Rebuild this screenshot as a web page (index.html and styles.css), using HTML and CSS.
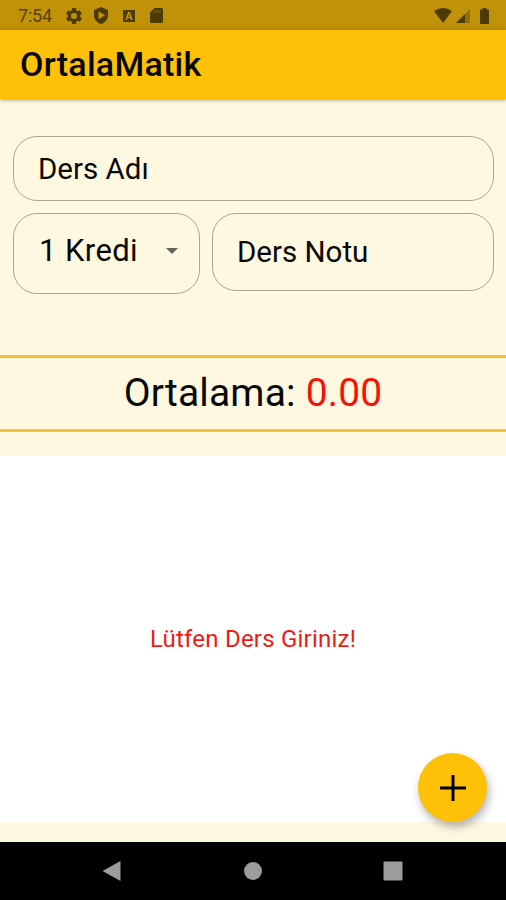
FILE: index.html
```html
<!DOCTYPE html>
<html lang="tr">
<head>
<meta charset="utf-8">
<title>OrtalaMatik</title>
<link rel="stylesheet" href="styles.css">
</head>
<body>
<div class="screen">
  <div class="status">
    <span class="clock">7:54</span>
    <svg class="ic gear" viewBox="2 2 20 20"><path fill-rule="evenodd" d="M19.4 13c.1-.7.1-1.3 0-2l2.1-1.6c.2-.2.2-.4.1-.6l-2-3.5c-.1-.2-.3-.3-.6-.2l-2.5 1c-.5-.4-1.1-.7-1.7-1l-.4-2.6c0-.3-.2-.5-.4-.5h-4c-.2 0-.4.2-.5.4l-.4 2.7c-.6.2-1.1.6-1.7 1l-2.5-1c-.2-.1-.5 0-.6.2l-2 3.5c-.1.2-.1.5.1.6L4.5 11c-.1.7-.1 1.3 0 2l-2.1 1.6c-.2.2-.2.4-.1.6l2 3.5c.1.2.3.3.6.2l2.5-1c.5.4 1.1.7 1.7 1l.4 2.6c0 .3.2.5.5.5h4c.2 0 .4-.2.5-.4l.4-2.7c.6-.2 1.1-.6 1.7-1l2.5 1c.2.1.5 0 .6-.2l2-3.5c.1-.2.1-.5-.1-.6zM12 15.800a3.800 3.800 0 1 1 0-7.600 3.800 3.800 0 0 1 0 7.600z"/></svg>
    <svg class="ic shield" viewBox="0 0 16 17"><path fill-rule="evenodd" d="M8 0 1 3v5.500c0 4 3 7.300 7 8.500 4-1.200 7-4.500 7-8.500V3zM5.500 4.200v8l6.500-4z"/></svg>
    <svg class="ic abox" viewBox="0 0 12 14"><path fill-rule="evenodd" d="M0 1h12v12H0zM5 3 2.300 11H4l.5-1.700h3L8 11h1.700L7 3zm1 2 .9 2.900H5.100z"/></svg>
    <svg class="ic card" viewBox="0 0 13 15"><path d="M4.500 0H11.500Q13 0 13 1.500V13.500Q13 15 11.500 15H1.500Q0 15 0 13.500V4.500z"/><path class="slots" d="M5 2v3M7.500 2v3M10 2v3"/></svg>
    <span class="spacer"></span>
    <svg class="ic wifi" viewBox="0 0 18 15"><path d="M0 3Q9-3 18 3L9 15z"/></svg>
    <svg class="ic signal" viewBox="0 0 14 14"><path class="dim" d="M14 0v14H0z"/><path d="M9 5v9H0z"/></svg>
    <svg class="ic battery" viewBox="0 0 9 16"><path d="M2.500 0h4v1.500H9V16H0V1.500h2.500z"/></svg>
  </div>
  <header class="appbar"><h1>OrtalaMatik</h1></header>
  <main class="content">
    <form class="form">
      <div class="field name"><span>Ders Adı</span></div>
      <div class="row">
        <div class="field credit"><span>1 Kredi</span><i class="arrow"></i></div>
        <div class="field grade"><span>Ders Notu</span></div>
      </div>
    </form>
    <div class="average"><span class="label">Ortalama:</span><span class="value">0.00</span></div>
    <section class="list"><p>Lütfen Ders Giriniz!</p></section>
    <button class="fab" aria-label="Ekle"><svg viewBox="0 0 26 26"><path d="M13 0v26M0 13h26"/></svg></button>
  </main>
  <nav class="navbar">
    <svg viewBox="0 0 20 22"><path d="M18.500 1v20L.5 11z"/></svg>
    <svg viewBox="0 0 20 22"><circle cx="10" cy="11" r="9"/></svg>
    <svg viewBox="0 0 20 22"><rect x=".5" y="1.500" width="19" height="19" rx="1"/></svg>
  </nav>
</div>
</body>
</html>
```
FILE: styles.css
```css
* { box-sizing: border-box; }
body { margin: 0; font-family: Roboto, "Liberation Sans", sans-serif; color: #080804; }
.screen { width: 506px; height: 900px; display: flex; flex-direction: column; background: #fff8e1; overflow: hidden; }
.status { height: 30px; flex: none; background: #c09208; display: flex; align-items: center; padding: 1px 17px 0 18px; }
.clock { font-size: 18px; line-height: 28px; color: #554207; width: 48px; letter-spacing: -0.2px; }
.ic { display: block; fill: #4d3b05; flex: none; }
.gear { width: 16px; height: 16px; }
.shield { width: 16px; height: 17px; margin-left: 11px; }
.abox { width: 12px; height: 14px; margin-left: 14px; }
.card { width: 13px; height: 15px; margin-left: 15px; }
.slots { stroke: #8b6a08; stroke-width: 1; }
.spacer { flex: 1; }
.wifi { width: 18px; height: 15px; }
.signal { width: 14px; height: 14px; margin-left: 4px; }
.dim { opacity: .4; }
.battery { width: 9px; height: 16px; margin-left: 10px; }
.appbar { height: 69px; flex: none; background: #ffc107; display: flex; align-items: center; padding: 0 0 2px 20px; box-shadow: 0 1px 4px rgba(0,0,0,.4); position: relative; }
h1 { margin: 0; font-size: 34px; font-weight: 500; line-height: 40px; letter-spacing: .25px; }
.content { flex: 1; display: flex; flex-direction: column; position: relative; }
.form { padding: 37px 12px 0 13px; height: 256px; display: flex; flex-direction: column; gap: 12px; }
.field { border: 1px solid #aea78f; border-radius: 24px; display: flex; align-items: center; font-size: 29.5px; }
.name { height: 65px; padding-left: 24px; }
.row { display: flex; gap: 12px; align-items: flex-start; }
.credit { width: 187px; height: 81px; padding: 0 21px 6px 25px; justify-content: space-between; font-size: 31px; letter-spacing: .4px; }
.arrow { border: 6px solid transparent; border-top-color: #67645b; border-bottom: 0; }
.grade { flex: 1; height: 78px; padding-left: 24px; }
.average { height: 77px; padding-bottom: 2px; border: solid #f7c136; border-width: 3px 0; display: flex; align-items: center; justify-content: center; gap: 10px; font-size: 39px; letter-spacing: .15px; }
.value { color: #f51209; }
.list { margin-top: 24px; height: 366px; background: #fff; display: flex; align-items: center; justify-content: center; }
.list p { margin: 0; font-size: 24px; letter-spacing: .22px; color: #ef1a14; }
.fab { position: absolute; right: 19px; bottom: 20px; width: 69px; height: 69px; border: 0; border-radius: 50%; background: #ffc107; padding: 0; display: flex; align-items: center; justify-content: center; box-shadow: 2px 5px 8px rgba(0,0,0,.3); }
.fab svg { width: 26px; height: 26px; stroke: #000; stroke-width: 3; }
.navbar { height: 58px; flex: none; background: #000; display: flex; justify-content: space-between; padding: 18px 103px 0 102px; }
.navbar svg { width: 20px; height: 22px; fill: #9c9c9c; }
```
